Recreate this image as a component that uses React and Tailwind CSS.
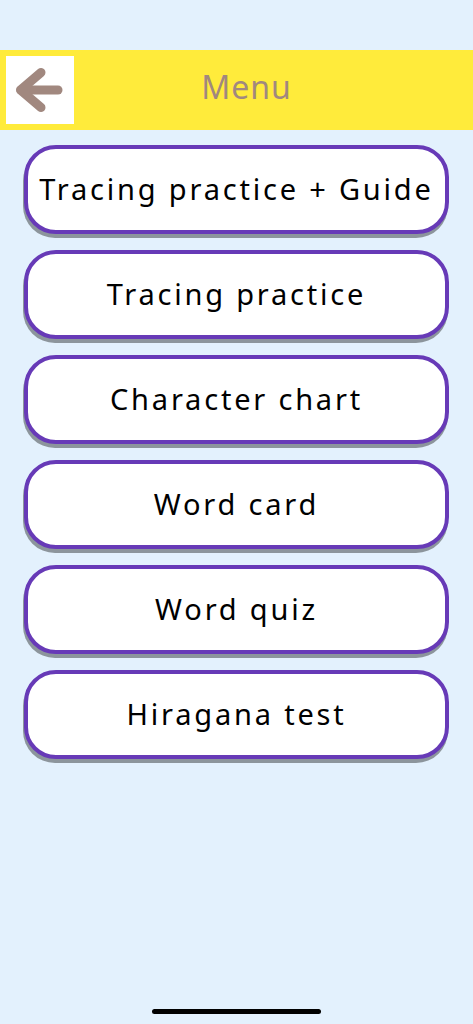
export default function App() {
  const items = [
    "Tracing practice + Guide",
    "Tracing practice",
    "Character chart",
    "Word card",
    "Word quiz",
    "Hiragana test",
  ];
  return (
    <div className="relative w-[473px] h-[1024px] bg-[#e3f1fd] overflow-hidden" style={{ fontFamily: '"Noto Sans", "Noto Sans CJK JP", sans-serif' }}>
      <div className="h-[50px]" />
      <div className="h-[80px] bg-[#ffeb3b] flex items-center px-[6px] relative">
        <div className="w-[68px] h-[68px] bg-white">
          <svg width="68" height="68" viewBox="0 0 68 68" fill="none" stroke="#a1887f" strokeWidth="9" strokeLinecap="round" strokeLinejoin="round">
            <path d="M52 34H15" />
            <path d="M35 16.5L14.5 34L35 51.5" />
          </svg>
        </div>
        <div className="absolute inset-0 flex items-center justify-center pl-[20px] pb-[6px] text-[32px] text-[#a1887f] tracking-[1px]">Menu</div>
      </div>
      <div className="flex flex-col gap-[16px] px-[24px] pt-[15px]">
        {items.map((t) => (
          <div key={t} className="h-[89px] rounded-[32px] border-[4px] border-[#673ab7] bg-white shadow-[-1px_4px_0_0_#8c959c] flex items-center justify-center text-[29px] text-black tracking-[2.8px] pb-[2px]">
            {t}
          </div>
        ))}
      </div>
      <div className="absolute left-[152px] top-[1009px] w-[169px] h-[5px] rounded-full bg-black" />
    </div>
  );
}
